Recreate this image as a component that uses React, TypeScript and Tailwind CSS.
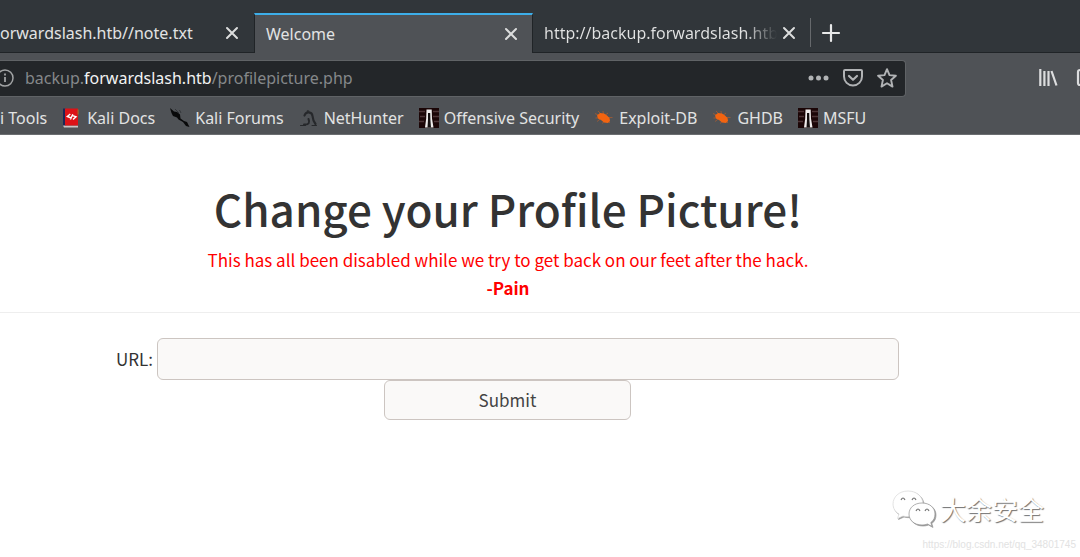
import type { ReactNode } from "react";

function CloseIcon() {
  return (
    <svg className="size-4" viewBox="0 0 16 16" fill="none" stroke="#dcdddd" strokeWidth="2" strokeLinecap="round">
      <path d="M3 3l10 10M13 3L3 13" />
    </svg>
  );
}

function DocsIcon() {
  return (
    <svg className="size-5" viewBox="0 0 20 20">
      <path d="M1 .5h2.500v17.500H1z" fill="#1c2757" />
      <path d="M1 17.500h15V19.500H2z" fill="#c9c4c4" />
      <path d="M3 .5h13v17H3z" fill="#dc1217" />
      <path d="M15.500 1.500h1.200v5h-1.200z" fill="#9c6a2a" />
      <path d="M8.300 6L5.300 8.500l4 1.500M10 7.500l4 1.200-3 2.800M10.800 6.200l-2.400 5.300" fill="none" stroke="#fff" strokeWidth="1.400" />
    </svg>
  );
}

function ForumsIcon() {
  return (
    <svg className="size-5" viewBox="0 0 20 20">
      <path d="M0 0l4 3.500 3 .5 3 2.500.5 4 3.500 2.500 3 1 2.500 5-3.500-1-3-4-4.500-2.500L7 9.500 3 8 1.500 5z" fill="#08090a" />
      <path d="M5 1l4 4M9.500 2l1.500 3" stroke="#33363a" strokeWidth="1" />
    </svg>
  );
}

function DragonIcon() {
  return (
    <svg className="size-5" viewBox="0 0 20 20" fill="none" stroke="#26282b" strokeLinecap="round">
      <path d="M5.500 7.500C7 3 13 3.500 13.500 8c.3 3 .5 5 3 8" strokeWidth="2.200" />
      <path d="M10 4.500C7.500 4 7 1.500 10 3" strokeWidth="1" />
      <path d="M5 16.500c5 .5 6-2 4.500-5.500" strokeWidth="2" />
      <path d="M1.500 17.500h5M13 17.500h4.500" strokeWidth="1" />
    </svg>
  );
}

function OffsecIcon() {
  return (
    <svg className="size-5" viewBox="0 0 20 20">
      <path d="M0 0h20v20H0z" fill="#1b0607" />
      <path d="M0 3.500h6M1 8.500h5M0 13.500h5M14 3.500h6M14 8.500h6M15 13.500h5" stroke="#4d3436" strokeWidth="1.600" />
      <path d="M7.500 1.500h5.200l.3 9 1.500 9H6l1.200-9z" fill="#efeceb" />
      <path d="M9 5h2.200l.2 7 .6 7.500H8.500l.5-8z" fill="#151010" />
    </svg>
  );
}

function ExploitIcon() {
  return (
    <svg className="size-5" viewBox="0 0 20 20" fill="#f26411">
      <path d="M3 7.500l3-2.500 4 .5 3 2 2.500 2.500.5 3-2 2-4-.5-3-2.500-3-1.500z" />
      <path d="M4 3l12 12M1 5.500l15 7M1.500 10l17-.5M9 3l1 10M3 13.500L14 5M8 15.500l7-6" stroke="#f26411" strokeWidth=".8" opacity=".55" />
    </svg>
  );
}

function Bookmark({ icon, label }: { icon?: ReactNode; label: string }) {
  return (
    <a href="#" className="flex shrink-0 items-center gap-[5px]">
      {icon}
      <span className="whitespace-nowrap">{label}</span>
    </a>
  );
}

function TabBar() {
  return (
    <div className="flex h-[53px] border-b border-[#202427] bg-[#31363a] pt-[13px]">
      <div className="flex w-[254px] shrink-0 items-center justify-between pt-px pr-[14px]">
        <button className="whitespace-nowrap">orwardslash.htb//note.txt</button>
        <button aria-label="Close note.txt"><CloseIcon /></button>
      </div>
      <div className="-mb-px flex w-[279px] shrink-0 items-center justify-between border-x border-t-2 border-x-[#202427] border-t-[#3daee9] bg-[#4f5256] pr-[13px] pl-[11px]">
        <button>Welcome</button>
        <button aria-label="Close Welcome"><CloseIcon /></button>
      </div>
      <div className="flex w-[277px] shrink-0 items-center gap-1 pt-px pr-[13px] pl-[11px]">
        <button className="min-w-0 flex-1 overflow-hidden bg-linear-to-r from-[#e2e3e3] from-86% to-transparent bg-clip-text text-left whitespace-nowrap text-transparent">
          http://backup.forwardslash.htb
        </button>
        <button aria-label="Close backup"><CloseIcon /></button>
      </div>
      <div className="my-[5px] flex items-center border-l border-[#66696c] pl-[10px]">
        <button aria-label="New tab">
          <svg className="size-5" viewBox="0 0 20 20" stroke="#e8e9e9" strokeWidth="2.200" strokeLinecap="round">
            <path d="M10 2v16M2 10h16" />
          </svg>
        </button>
      </div>
    </div>
  );
}

function AddressBar() {
  return (
    <div className="flex h-[50px] items-center">
      <div className="flex h-[37px] min-w-0 flex-1 items-center rounded-r border border-l-0 border-[#606366] bg-[#232629] pr-2 text-[#b1b3b5]">
        <svg className="-ml-1 size-[18px] shrink-0" viewBox="0 0 18 18" fill="none" stroke="#a2a4a5" strokeWidth="1.500">
          <circle cx="9" cy="9" r="8" />
          <path d="M9 8v5M9 4.500v2" strokeWidth="1.800" />
        </svg>
        <div className="min-w-0 flex-1 pl-[11px] whitespace-nowrap text-[#85888a]">
          backup.<span className="text-[#f2f3f3]">forwardslash.htb</span>/profilepicture.php
        </div>
        <div className="flex items-center gap-[14px]">
          <button aria-label="Page actions">
            <svg className="h-5 w-[21px]" viewBox="0 0 21 20" fill="#b1b3b5">
              <circle cx="3" cy="10" r="2.500" /><circle cx="10.500" cy="10" r="2.500" /><circle cx="18" cy="10" r="2.500" />
            </svg>
          </button>
          <button aria-label="Save to Pocket">
            <svg className="size-5" viewBox="0 0 20 20" fill="none" stroke="#b1b3b5" strokeWidth="2" strokeLinecap="round" strokeLinejoin="round">
              <path d="M2 2h16q1 0 1 1v5.500a9 9 0 0 1-18 0V3q0-1 1-1z" />
              <path d="M6 8l4 3.800L14 8" strokeWidth="2.200" />
            </svg>
          </button>
          <button aria-label="Bookmark page">
            <svg className="size-5" viewBox="0 0 20 20" fill="none" stroke="#b1b3b5" strokeWidth="1.900" strokeLinejoin="round">
              <path d="M10 1.200l2.500 5.900 6.400.6-4.800 4.300 1.400 6.600-5.500-3.400-5.500 3.400 1.400-6.600L1.100 7.700l6.400-.6z" />
            </svg>
          </button>
        </div>
      </div>
      <div className="flex shrink-0 items-center gap-[18px] pl-[132px]">
        <button aria-label="Library">
          <svg className="size-5" viewBox="0 0 20 20" stroke="#dcddde" strokeWidth="2.200" fill="none">
            <path d="M2.300 1v17M6.400 3v15M10.500 3v15M13.500 3l5 14.500" />
          </svg>
        </button>
        <button aria-label="Sidebars">
          <svg className="h-5 w-1" viewBox="0 0 4 20" fill="none" stroke="#dcddde" strokeWidth="2.200">
            <path d="M5 2H4Q2 2 2 4v11q0 2 2 2h1" />
          </svg>
        </button>
      </div>
    </div>
  );
}

function Watermark() {
  return (
    <div className="absolute right-1 bottom-1 flex flex-col items-end">
      <div className="mr-8 flex items-center gap-1">
        <svg className="h-10 w-11 drop-shadow-[1px_1px_0px_#9a9a9a]" viewBox="0 0 44 40" fill="#fff" stroke="#d8d8d8" strokeWidth=".7">
          <path d="M16 2C7 2 1 8 1 15c0 4 2 8 6 10l-1.500 4.500L11 27c2 .6 4 .8 6 .6 1 .1 14-1 14-12.600C31 8 25 2 16 2z" />
          <path d="M30 14c-8 0-13 5-13 11s5 11 13 11c2 0 4-.3 5.500-1l4.500 2.500-1.200-4C42 31.500 43 28 43 25c0-6-5-11-13-11z" stroke="#8f8f8f" />
          <path d="M9 11q2-4 4 0M20 11q2-4 4 0M24 22q2-4 4 0M33 22q2-4 4 0" fill="none" stroke="#777" strokeWidth="1.200" />
        </svg>
        <span className="font-['Noto_Sans_CJK_SC',sans-serif] text-[26px] leading-10 text-white [text-shadow:1px_1px_1px_#707070]">大余安全</span>
      </div>
      <span className="mt-2 font-['Liberation_Sans',sans-serif] text-[10px] leading-4 text-[#e2e2e2]">https://blog.csdn.net/qq_34801745</span>
    </div>
  );
}

export default function App() {
  return (
    <div className="relative min-h-screen overflow-hidden bg-white">
      <header className="bg-[#4f5256] font-['Noto_Sans',sans-serif] text-base text-[#e2e3e3]">
        <TabBar />
        <AddressBar />
        <nav className="flex h-8 items-center gap-[15px] border-b border-[#6b6e71] pb-px">
          <Bookmark label="i Tools" />
          <Bookmark icon={<DocsIcon />} label="Kali Docs" />
          <Bookmark icon={<ForumsIcon />} label="Kali Forums" />
          <Bookmark icon={<DragonIcon />} label="NetHunter" />
          <Bookmark icon={<OffsecIcon />} label="Offensive Security" />
          <Bookmark icon={<ExploitIcon />} label="Exploit-DB" />
          <Bookmark icon={<ExploitIcon />} label="GHDB" />
          <Bookmark icon={<OffsecIcon />} label="MSFU" />
        </nav>
      </header>
      <main className="font-['Noto_Sans_CJK_SC',sans-serif] text-[17px] text-[#333]">
        <div className="border-b border-[#eee] pt-10 pr-16 pb-[10px] text-center text-[#f00]">
          <h1 className="mb-[5px] text-[44px] leading-[66px] font-medium text-[#333]">Change your Profile Picture!</h1>
          <p className="leading-7">This has all been disabled while we try to get back on our feet after the hack.</p>
          <p className="leading-7 font-bold">-Pain</p>
        </div>
        <form className="flex flex-col items-center pt-[25px] pr-[65px] pb-24" onSubmit={(e) => e.preventDefault()}>
          <div className="flex items-center gap-1">
            <label htmlFor="url">URL:</label>
            <input id="url" type="text" className="h-[42px] w-[742px] rounded-md border border-[#ccc5c1] bg-[#faf9f8] px-3" />
          </div>
          <button className="h-10 w-[247px] rounded-md border border-[#ccc5c1] bg-[#faf9f8] text-[#444]">Submit</button>
        </form>
      </main>
      <Watermark />
    </div>
  );
}
